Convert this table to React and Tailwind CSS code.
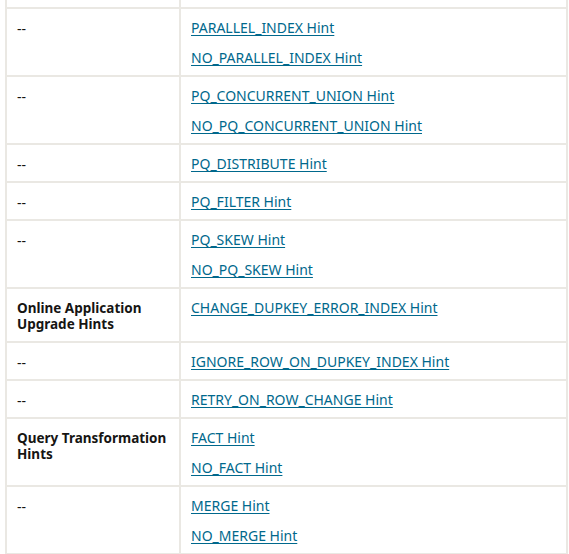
import React from "react";

const rows = [
  { label: "--", links: ["PARALLEL_INDEX Hint", "NO_PARALLEL_INDEX Hint"] },
  { label: "--", links: ["PQ_CONCURRENT_UNION Hint", "NO_PQ_CONCURRENT_UNION Hint"] },
  { label: "--", links: ["PQ_DISTRIBUTE Hint"] },
  { label: "--", links: ["PQ_FILTER Hint"] },
  { label: "--", links: ["PQ_SKEW Hint", "NO_PQ_SKEW Hint"] },
  { label: "Online Application Upgrade Hints", bold: true, links: ["CHANGE_DUPKEY_ERROR_INDEX Hint"] },
  { label: "--", links: ["IGNORE_ROW_ON_DUPKEY_INDEX Hint"] },
  { label: "--", links: ["RETRY_ON_ROW_CHANGE Hint"] },
  { label: "Query Transformation Hints", bold: true, links: ["FACT Hint", "NO_FACT Hint"] },
  { label: "--", links: ["MERGE Hint", "NO_MERGE Hint"] },
];

export default function App() {
  return (
    <div
      className="bg-white w-[569px] h-[554px] overflow-hidden pl-[5px] text-[14px] text-[#161513]"
      style={{ fontFamily: '"Noto Sans", "Open Sans", Arial, sans-serif' }}
    >
      <table className="w-[563px] border-collapse table-fixed">
        <colgroup>
          <col className="w-[174px]" />
          <col />
        </colgroup>
        <tbody>
          <tr className="h-[8px]">
            <td className="border-2 border-t-0 border-[#eae8e3] p-0"></td>
            <td className="border-2 border-t-0 border-[#eae8e3] p-0"></td>
          </tr>
          {rows.map((row, i) => (
            <tr key={i}>
              <td className="border-2 border-[#eae8e3] align-top px-[10px] pt-[9px] pb-[7px]">
                {row.bold ? (
                  <span className="font-bold text-[13.5px] leading-[16px] block pt-[2px] pb-[2px]">{row.label}</span>
                ) : (
                  <span className="leading-[18px] block pt-[2px]">{row.label}</span>
                )}
              </td>
              <td className="border-2 border-[#eae8e3] align-top px-[10px] pt-[9px] pb-[7px]">
                <div className="flex flex-col gap-[10px]">
                  {row.links.map((l) => (
                    <a key={l} href="#" className="leading-[20px] text-[#00688c] underline underline-offset-2">
                      {l}
                    </a>
                  ))}
                </div>
              </td>
            </tr>
          ))}
        </tbody>
      </table>
    </div>
  );
}
